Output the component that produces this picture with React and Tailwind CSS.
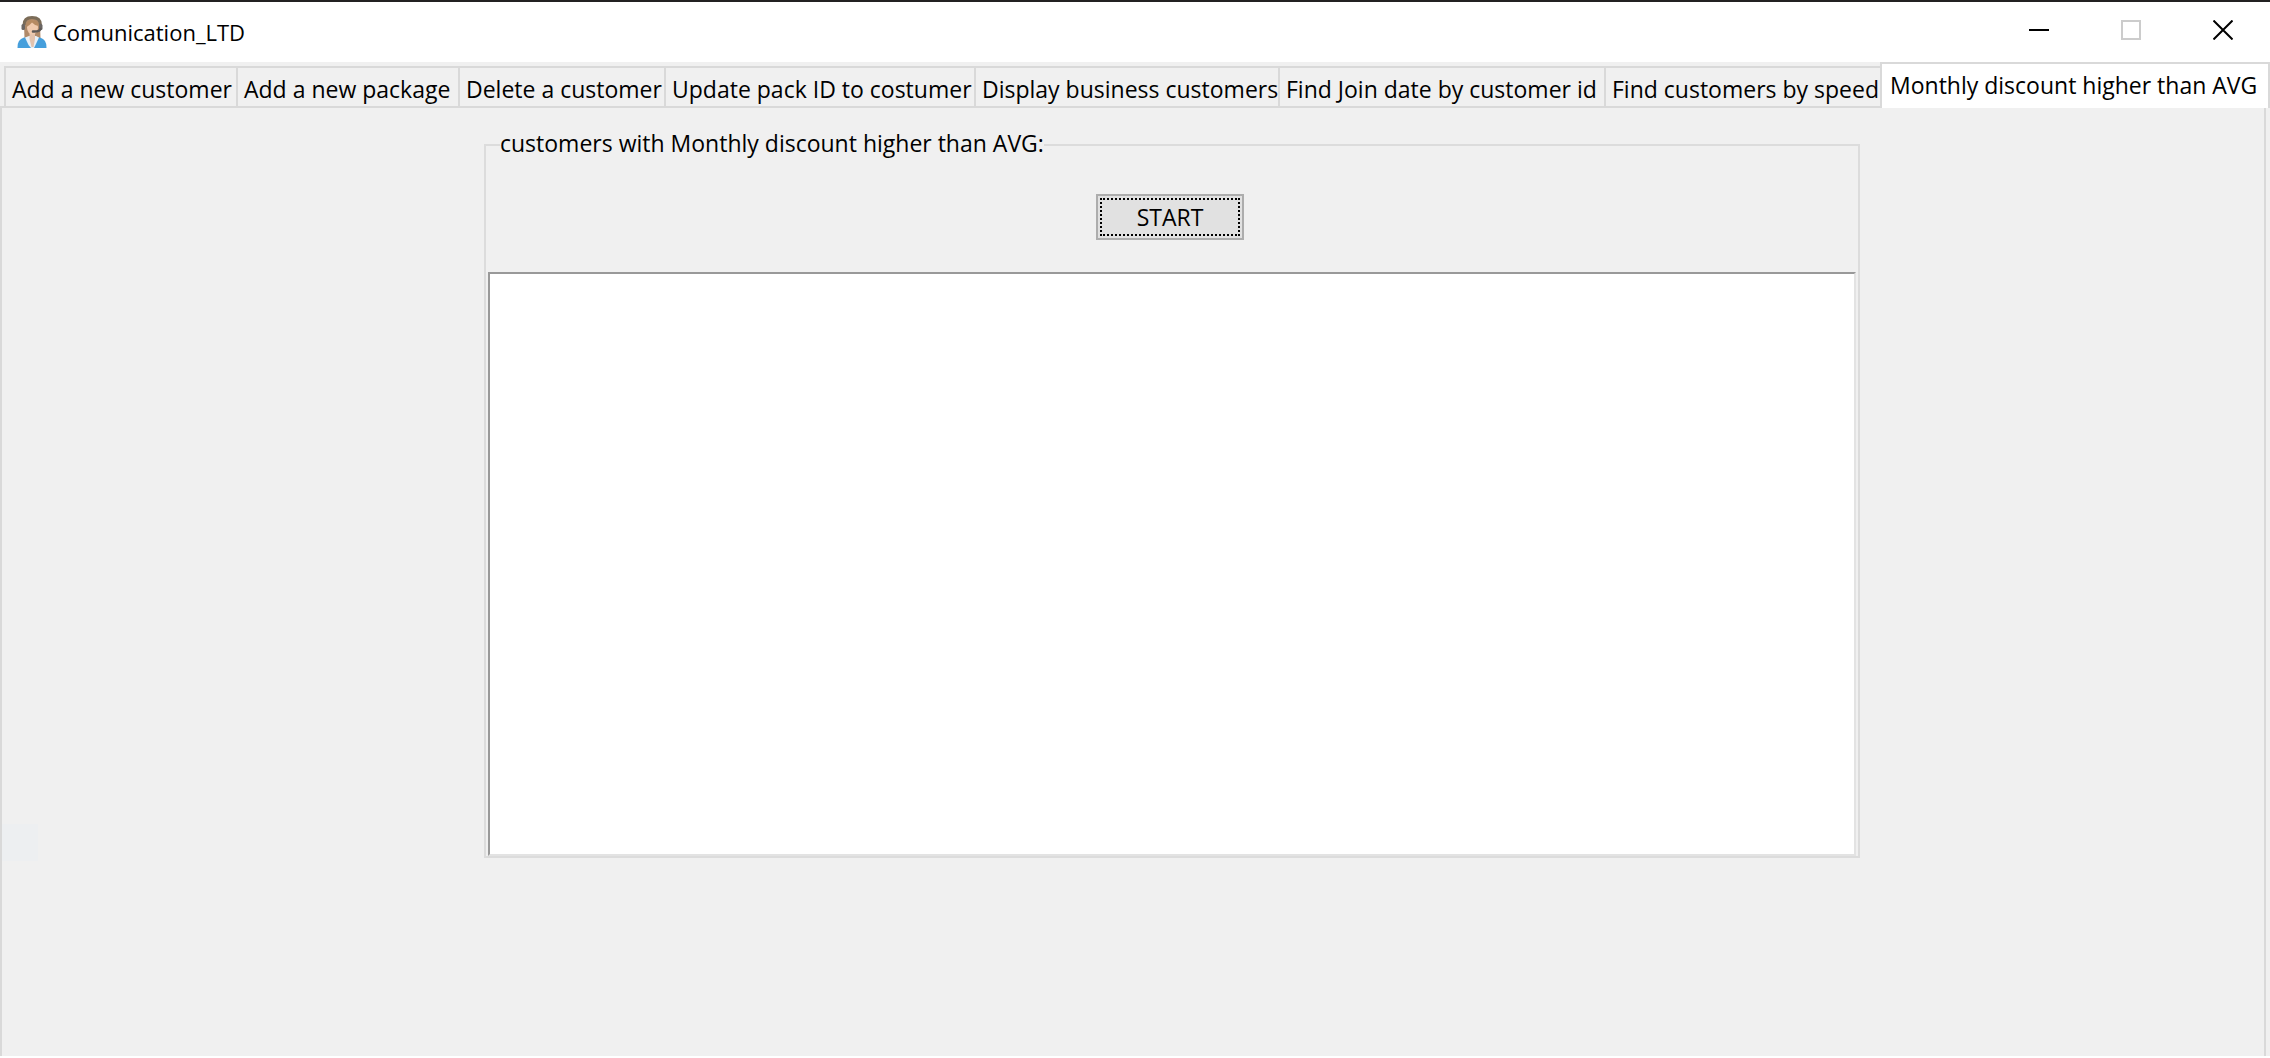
const tabs = [
  { label: "Add a new customer", width: "w-[232px]" },
  { label: "Add a new package", width: "w-[222px]" },
  { label: "Delete a customer", width: "w-[206px]" },
  { label: "Update pack ID to costumer", width: "w-[310px]" },
  { label: "Display business customers", width: "w-[304px]" },
  { label: "Find Join date by customer id", width: "w-[326px]" },
  { label: "Find customers by speed", width: "w-[276px]" },
];

function OperatorIcon() {
  return (
    <svg width="30" height="32" viewBox="0 0 30 32" aria-hidden="true">
      <path d="M7 9 Q7 1 15 1 Q23 1 23 9 L23.500 22 L7.500 22 Z" fill="#b08a6a" />
      <path d="M0.500 32 Q0 23.500 7 21.500 H23 Q30 23.500 29.500 32 Z" fill="#469fdc" />
      <path d="M8 21.500 L12 20 H19 L22 21.500 L18.500 29 L17 32 H14 L11.500 29 Z" fill="#e9f0f7" />
      <path d="M12.500 16 H18 V23 L16.500 31 H14.500 L12.500 23 Z" fill="#e3c3ae" />
      <ellipse cx="15.500" cy="11.500" rx="5.500" ry="7" fill="#f0caae" />
      <path d="M9.500 11 Q9 4 15 4 Q21.500 4 21.500 10 Q17 9 15 6.500 Q13 9 9.500 11 Z" fill="#b58a62" />
      <path d="M7 9 Q7 1.500 15 1.500 Q23.500 1.500 23.500 9" fill="none" stroke="#7b6c58" strokeWidth="3" />
      <rect x="4.500" y="8" width="3.500" height="6" rx="1.500" fill="#6a6664" />
      <rect x="22" y="8" width="3.500" height="6" rx="1.500" fill="#6a6664" />
      <path d="M23.500 13 Q22 16 16 15.500" fill="none" stroke="#5d5856" strokeWidth="2.500" strokeLinecap="round" />
    </svg>
  );
}

export default function App() {
  return (
    <div className="relative flex min-h-screen flex-col overflow-hidden border-t-2 border-[#232122] bg-white font-['Open_Sans','Noto_Sans',sans-serif] text-[23px] leading-[30px] text-black">
      <header className="flex h-[60px] shrink-0 items-center pl-[17px] pr-px">
        <div className="flex flex-1 items-center gap-1.5">
          <OperatorIcon />
          <h1 className="text-[22px]">Comunication_LTD</h1>
        </div>
        <button type="button" aria-label="Minimize" className="flex h-full w-[92px] items-center justify-center pb-1">
          <svg width="20" height="20" viewBox="0 0 20 20"><path d="M0 10H20" stroke="#000" strokeWidth="2" /></svg>
        </button>
        <button type="button" aria-label="Maximize" disabled className="flex h-full w-[92px] items-center justify-center pb-1">
          <svg width="20" height="20" viewBox="0 0 20 20"><rect x="1" y="1" width="18" height="18" fill="none" stroke="#ccc" strokeWidth="2" /></svg>
        </button>
        <button type="button" aria-label="Close" className="flex h-full w-[92px] items-center justify-center pb-1">
          <svg width="20" height="20" viewBox="0 0 20 20"><path d="M0.500 0.500L19.500 19.500M19.500 0.500L0.500 19.500" stroke="#000" strokeWidth="2" /></svg>
        </button>
      </header>

      <div role="tablist" className="flex h-[46px] shrink-0 bg-[#f0f0f0]">
        <div className="flex items-end border-b-2 border-[#d9d9d9] pl-1">
          {tabs.map((tab) => (
            <button
              key={tab.label}
              type="button"
              role="tab"
              aria-selected="false"
              className={`${tab.width} h-10 shrink-0 whitespace-nowrap border-l-2 border-t-2 border-[#d9d9d9] pl-1.5 pt-1 text-left`}
            >
              {tab.label}
            </button>
          ))}
        </div>
        <button
          type="button"
          role="tab"
          aria-selected="true"
          className="h-[46px] flex-1 whitespace-nowrap border-x-2 border-t-2 border-[#d9d9d9] bg-white pb-0.5 pl-2 text-left"
        >
          Monthly discount higher than AVG
        </button>
      </div>

      <div className="mb-0.5 flex flex-1 bg-[#f0f0f0] pr-1">
        <main role="tabpanel" className="flex-1 border-x-2 border-[#d9d9d9] pl-[482px] pr-[404px] pt-5">
          <fieldset className="min-w-0 border-2 border-[#dcdcdc] px-0.5">
            <legend className="ml-3 pb-1">customers with Monthly discount higher than AVG:</legend>
            <div className="flex justify-center pb-8 pr-1 pt-8">
              <button type="button" className="h-[46px] w-[148px] border-2 border-[#adadad] bg-[#e1e1e1] p-0.5">
                <span className="flex h-full items-center justify-center border-2 border-dotted border-black">START</span>
              </button>
            </div>
            <textarea
              readOnly
              aria-label="Customers with monthly discount higher than AVG"
              className="block h-[584px] w-full resize-none border-2 border-b-[#e3e3e3] border-l-[#999] border-r-[#e3e3e3] border-t-[#999] bg-white outline-none"
            />
          </fieldset>
        </main>
      </div>
      <div className="pointer-events-none absolute left-0.5 top-[822px] h-[37px] w-9 bg-[#edeff1]" />
    </div>
  );
}
